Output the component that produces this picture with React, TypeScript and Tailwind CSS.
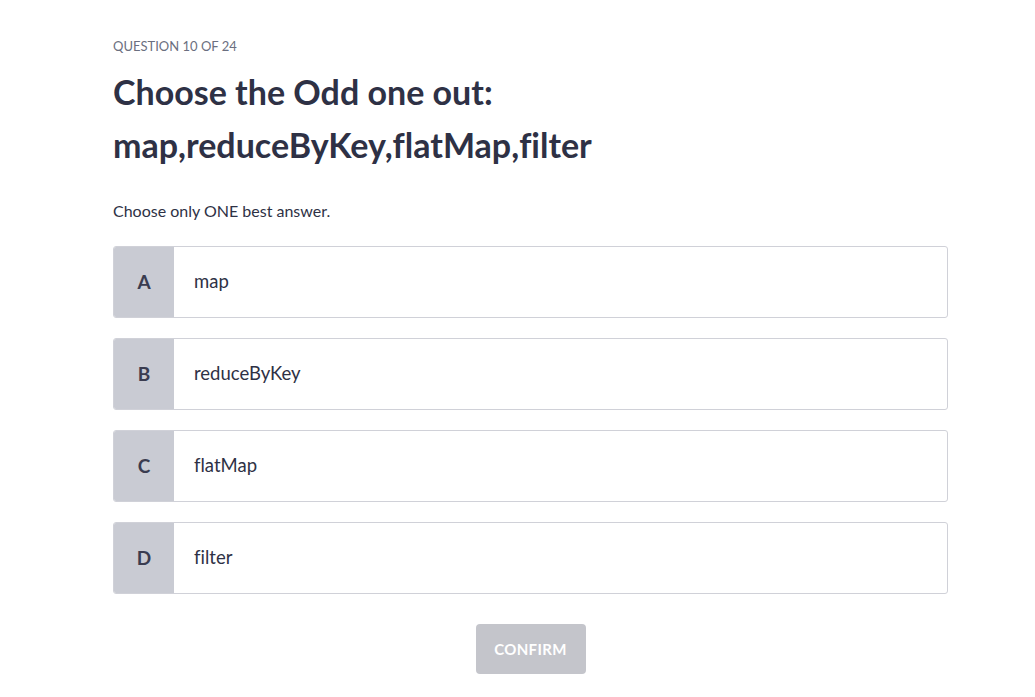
const OPTIONS = [
  { letter: 'A', text: 'map' },
  { letter: 'B', text: 'reduceByKey' },
  { letter: 'C', text: 'flatMap' },
  { letter: 'D', text: 'filter' },
]

export default function App() {
  return (
    <div className="min-h-screen bg-white font-['Lato',sans-serif] text-[#2e3145] [font-variant-ligatures:none]">
      <div className="ml-[113px] w-[835px] pt-[38px]">
        {/* Header */}
        <div className="text-[13px] leading-4 uppercase text-[#6b6f80]">Question 10 of 24</div>
        <h1 className="mt-[11px] text-[34px] leading-[53px] font-bold text-[#2e3145]">
          Choose the Odd one out:
          <br />
          map,reduceByKey,flatMap,filter
        </h1>
        <p className="mt-[30px] text-[16px] leading-5 text-[#2e3145]">Choose only ONE best answer.</p>

        {/* Options */}
        <div className="mt-[25px] flex flex-col gap-[20px]">
          {OPTIONS.map((opt) => (
            <button
              key={opt.letter}
              className="flex h-[72px] w-full overflow-hidden rounded-[3px] border border-[#d0d1d8] bg-white text-left"
            >
              <div className="flex w-[60px] shrink-0 items-center justify-center bg-[#c9cbd3] text-[19px] font-bold text-[#3a3c50]">
                {opt.letter}
              </div>
              <div className="flex items-center pl-[20px] text-[18.5px] text-[#2e3145]">{opt.text}</div>
            </button>
          ))}
        </div>

        {/* Confirm */}
        <div className="mt-[30px] flex justify-center">
          <button className="h-[50px] w-[110px] rounded-[4px] bg-[#c4c5cb] text-[15px] font-bold uppercase tracking-wide text-white">
            Confirm
          </button>
        </div>
      </div>
    </div>
  )
}
